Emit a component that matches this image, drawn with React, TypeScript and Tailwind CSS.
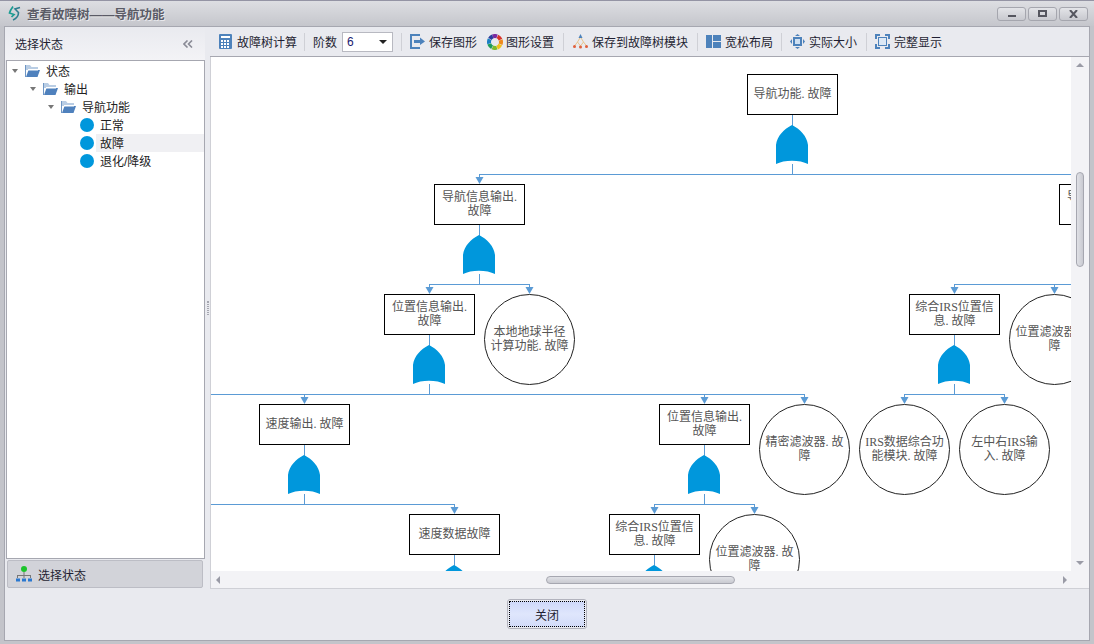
import type { ReactNode } from 'react';

const UI_FONT = { fontFamily: '"Liberation Sans", "Noto Sans CJK SC", sans-serif' };
const DIAGRAM_FONT = { fontFamily: '"Liberation Serif", "Noto Sans CJK SC", serif' };

// page coordinates of the drawing area
const CANVAS_X = 211;
const CANVAS_Y = 57;

const boxes = [
  { x: 747, y: 74, lines: ['导航功能. 故障'] },
  { x: 434, y: 184, lines: ['导航信息输出.', '故障'] },
  { x: 1059, y: 184, lines: ['导航信息输出.', '故障'] },
  { x: 384, y: 294, lines: ['位置信息输出.', '故障'] },
  { x: 909, y: 294, lines: ['综合IRS位置信', '息. 故障'] },
  { x: 259, y: 404, lines: ['速度输出. 故障'] },
  { x: 659, y: 404, lines: ['位置信息输出.', '故障'] },
  { x: 409, y: 514, lines: ['速度数据故障'] },
  { x: 609, y: 514, lines: ['综合IRS位置信', '息. 故障'] },
];

const circles = [
  { x: 484, y: 294, lines: ['本地地球半径', '计算功能. 故障'] },
  { x: 1009, y: 294, lines: ['位置滤波器. 故', '障'] },
  { x: 759, y: 404, lines: ['精密滤波器. 故', '障'] },
  { x: 859, y: 404, lines: ['IRS数据综合功', '能模块. 故障'] },
  { x: 959, y: 404, lines: ['左中右IRS输', '入. 故障'] },
  { x: 709, y: 514, lines: ['位置滤波器. 故', '障'] },
];

const buses = [
  { y: 174, from: 479, to: 1104, stem: 792, arrows: [479, 1104] },
  { y: 284, from: 429, to: 529, stem: 479, arrows: [429, 529] },
  { y: 284, from: 954, to: 1254, stem: 1104, arrows: [954, 1054] },
  { y: 394, from: 100, to: 804, stem: 429, arrows: [304, 704, 804] },
  { y: 394, from: 904, to: 1004, stem: 954, arrows: [904, 1004] },
  { y: 504, from: 100, to: 454, stem: 304, arrows: [454] },
  { y: 504, from: 654, to: 754, stem: 704, arrows: [654, 754] },
];

function Gate({ cx, top }: { cx: number; top: number }) {
  const l = cx - 16;
  return (
    <path
      transform={`translate(${l} ${top})`}
      d="M0 39V20C1 11 8 4 16 0C24 4 31 11 32 20V39C24 34.5 8 34.5 0 39Z"
      fill="#0097dc"
    />
  );
}

function Diagram() {
  return (
    <div className="relative flex-1 overflow-hidden bg-white" style={DIAGRAM_FONT}>
      <svg className="absolute inset-0" width="860" height="514" viewBox={`${CANVAS_X} ${CANVAS_Y} 860 514`}>
        {boxes.map((b) => (
          <g key={`${b.x}-${b.y}`}>
            <line x1={b.x + 45.5} y1={b.y + 40} x2={b.x + 45.5} y2={b.y + 52} stroke="#5b9bd5" />
            <Gate cx={b.x + 45} top={b.y + 51} />
          </g>
        ))}
        {buses.map((bus) => (
          <g key={`${bus.y}-${bus.stem}`}>
            <line x1={bus.from} y1={bus.y + 0.5} x2={bus.to} y2={bus.y + 0.5} stroke="#5b9bd5" />
            <line x1={bus.stem + 0.5} y1={bus.y - 10} x2={bus.stem + 0.5} y2={bus.y} stroke="#5b9bd5" />
            {bus.arrows.map((x) => (
              <g key={x}>
                <line x1={x + 0.5} y1={bus.y} x2={x + 0.5} y2={bus.y + 4} stroke="#5b9bd5" />
                <polygon points={`${x - 3.5},${bus.y + 3} ${x + 4.5},${bus.y + 3} ${x + 0.5},${bus.y + 10}`} fill="#5b9bd5" />
              </g>
            ))}
          </g>
        ))}
      </svg>
      {boxes.map((b) => (
        <div
          key={`${b.x}-${b.y}`}
          className="absolute flex h-[41px] w-[91px] flex-col items-center justify-center border border-black bg-white pb-[2px] text-[12px] leading-[14px] whitespace-nowrap text-[#555]"
          style={{ left: b.x - CANVAS_X, top: b.y - CANVAS_Y }}
        >
          {b.lines.map((t) => (
            <span key={t}>{t}</span>
          ))}
        </div>
      ))}
      {circles.map((c) => (
        <div
          key={`${c.x}-${c.y}`}
          className="absolute flex h-[91px] w-[91px] flex-col items-center justify-center rounded-full border border-[#222] bg-white pb-[2px] text-[12px] leading-[14px] whitespace-nowrap text-[#555]"
          style={{ left: c.x - CANVAS_X, top: c.y - CANVAS_Y }}
        >
          {c.lines.map((t) => (
            <span key={t}>{t}</span>
          ))}
        </div>
      ))}
    </div>
  );
}

function Logo() {
  return (
    <svg width="13" height="15" viewBox="0 0 13 15" fill="none" className="ml-[8px] shrink-0">
      <path d="M5 0.5C3.5 2.5 2 5 1.5 7L6 8.5L3.5 11" stroke="#1a9c92" strokeWidth="1.7" />
      <path d="M12 1.5L7 3L10.5 6.5C10.5 9.5 8.5 12.5 5 14" stroke="#2f7f8f" strokeWidth="1.6" />
    </svg>
  );
}

function CalcIcon() {
  const cells = [5, 8, 11];
  return (
    <svg width="13" height="15" viewBox="0 0 13 15">
      <rect width="13" height="15" rx="1" fill="#4d82bb" />
      <rect x="2" y="2" width="9" height="2" fill="#fff" />
      {cells.map((y) => cells.map((x) => <rect key={`${x}${y}`} x={x - 3} y={y + 1} width="2" height="2" fill="#fff" />))}
    </svg>
  );
}

function SaveIcon() {
  return (
    <svg width="15" height="15" viewBox="0 0 15 15">
      <path d="M0 0H10V2H2V13H10V15H0Z" fill="#4d82bb" />
      <path d="M4 6H10V3.5L15 7.5L10 11V9H4Z" fill="#4d82bb" />
    </svg>
  );
}

function WheelIcon() {
  const colors = ['#7b2aa0', '#d9342b', '#ee8a1d', '#f1c21b', '#7fbb2a', '#1f9c5a', '#1a7fc4', '#2b3d9c'];
  const r = 6;
  const c = 2 * Math.PI * r;
  return (
    <svg width="16" height="16" viewBox="0 0 16 16">
      {colors.map((col, i) => (
        <circle
          key={col}
          cx="8"
          cy="8"
          r={r}
          fill="none"
          stroke={col}
          strokeWidth="4"
          strokeDasharray={`${c / 8 - 0.4} ${(c * 7) / 8 + 0.4}`}
          strokeDashoffset={-(c / 8) * i}
          transform="rotate(-112 8 8)"
        />
      ))}
    </svg>
  );
}

function TreeIcon() {
  return (
    <svg width="15" height="15" viewBox="0 0 15 15" fill="none">
      <path d="M7.5 3L4.5 8L1.5 12M7.5 3L10.5 8L13.5 12M4.5 8L7.5 12L10.5 8" stroke="#e8c48c" strokeWidth="1" />
      <path d="M7.5 0L9.5 4H5.5Z" fill="#4d82bb" />
      <circle cx="1.5" cy="12.5" r="1.5" fill="#e0603c" />
      <circle cx="7.5" cy="13" r="1.5" fill="#e0603c" />
      <circle cx="13.5" cy="12.5" r="1.5" fill="#e0603c" />
    </svg>
  );
}

function LayoutIcon() {
  return (
    <svg width="15" height="13" viewBox="0 0 15 13">
      <rect width="6" height="13" fill="#4d82bb" />
      <rect x="7" width="8" height="6" fill="#4d82bb" />
      <rect x="7" y="7" width="8" height="6" fill="#4d82bb" />
    </svg>
  );
}

function ActualIcon() {
  return (
    <svg width="15" height="15" viewBox="0 0 15 15" fill="#4d82bb">
      <rect x="3" y="3" width="9" height="9" />
      <rect x="5" y="5" width="5" height="5" fill="#cfe0f2" />
      <path d="M5 2H10L7.5 0ZM5 13H10L7.5 15ZM2 5V10L0 7.5ZM13 5V10L15 7.5Z" />
    </svg>
  );
}

function FitIcon() {
  return (
    <svg width="15" height="15" viewBox="0 0 15 15" fill="none">
      <path d="M1 5V1H5M10 1H14V5M14 10V14H10M5 14H1V10" stroke="#4d82bb" strokeWidth="2" />
      <rect x="3.5" y="3.5" width="8" height="8" fill="#dce8f5" stroke="#4d82bb" />
    </svg>
  );
}

function OrgIcon() {
  return (
    <svg width="16" height="16" viewBox="0 0 16 16">
      <circle cx="8" cy="3" r="3" fill="#1cc42c" />
      <path d="M7.5 6H8.5V9H15V12H14V10H8.5V12H7.5V10H2V12H1V9H7.5Z" fill="#777" />
      <rect x="0" y="12.5" width="4" height="3" fill="#2a78d0" />
      <rect x="6" y="12.5" width="4" height="3" fill="#2a78d0" />
      <rect x="12" y="12.5" width="4" height="3" fill="#2a78d0" />
    </svg>
  );
}

function FolderIcon() {
  return (
    <svg width="15" height="14" viewBox="0 0 15 14" className="shrink-0">
      <path d="M0 1H5L6.5 3H13V6H0Z" fill="#b9cde4" />
      <path d="M0 1H1V13H0Z" fill="#6f96c4" />
      <path d="M1 13L3.5 6H15L12.5 13Z" fill="#4f81bd" />
      <path d="M3 5H13V6.5H3Z" fill="#fff" />
    </svg>
  );
}

function Caret() {
  return <span className="h-0 w-0 shrink-0 border-x-[3.5px] border-t-[4px] border-x-transparent border-t-[#777]" />;
}

function Dot() {
  return <span className="h-[14px] w-[14px] shrink-0 rounded-full bg-[#0097dc]" />;
}

const Sep = () => <span className="mx-[4px] h-[18px] w-px shrink-0 bg-[#cfd0d6]" />;

function ToolItem({ icon, label, w }: { icon: ReactNode; label: string; w: string }) {
  return (
    <div className={`flex shrink-0 items-center ${w}`}>
      {icon}
      <span className="ml-auto whitespace-nowrap pt-[3px]">{label}</span>
    </div>
  );
}

function Toolbar() {
  return (
    <div className="flex h-[30px] shrink-0 items-center border-b border-[#a6a7b0] bg-[#e9eaef] pl-[9px] text-[12px] text-[#1f1f33]">
      <ToolItem icon={<CalcIcon />} label="故障树计算" w="w-[78px]" />
      <div className="mx-[3px] flex w-[9px] justify-center"><Sep /></div>
      <span className="ml-[1px] whitespace-nowrap pt-[3px]">阶数</span>
      <div className="ml-[5px] flex h-[20px] w-[51px] shrink-0 items-center justify-between border border-[#b8b9c1] bg-white pr-[5px] pl-[4px]">
        <span className="text-[#1a1a70]">6</span>
        <span className="h-0 w-0 border-x-[4px] border-t-[4px] border-x-transparent border-t-[#222]" />
      </div>
      <div className="mx-[3px] flex w-[10px] justify-center"><Sep /></div>
      <ToolItem icon={<SaveIcon />} label="保存图形" w="w-[67px] ml-[1px]" />
      <ToolItem icon={<WheelIcon />} label="图形设置" w="w-[67px] ml-[10px]" />
      <div className="flex w-[19px] justify-center"><Sep /></div>
      <ToolItem icon={<TreeIcon />} label="保存到故障树模块" w="w-[115px]" />
      <div className="flex w-[18px] justify-center"><Sep /></div>
      <ToolItem icon={<LayoutIcon />} label="宽松布局" w="w-[67px]" />
      <div className="flex w-[17px] justify-center"><Sep /></div>
      <ToolItem icon={<ActualIcon />} label="实际大小" w="w-[67px]" />
      <div className="flex w-[18px] justify-center"><Sep /></div>
      <ToolItem icon={<FitIcon />} label="完整显示" w="w-[67px]" />
    </div>
  );
}

function TreeRow({ depth, label }: { depth: number; label: string }) {
  return (
    <div className="flex h-[18px] items-center" style={{ paddingLeft: 5 + depth * 18 }}>
      <Caret />
      <span className="ml-[7px]"><FolderIcon /></span>
      <span className="ml-[6px] pt-[2px]">{label}</span>
    </div>
  );
}

function LeafRow({ label, active }: { label: string; active?: boolean }) {
  return (
    <div className="flex h-[18px] items-center pl-[73px]">
      <Dot />
      <span className={`ml-[2px] flex h-[18px] flex-1 items-center pt-[2px] pl-[4px] ${active ? 'bg-[#f0f0f3]' : ''}`}>{label}</span>
    </div>
  );
}

function WinButton({ children }: { children: ReactNode }) {
  return (
    <div className="flex h-[14px] w-[29px] items-center justify-center rounded-[3px] border border-[#a5a6ae] bg-gradient-to-b from-[#e3e4e8] to-[#c8c9cf]">
      {children}
    </div>
  );
}

export default function App() {
  return (
    <div className="flex h-[644px] w-[1094px] flex-col overflow-hidden border-t border-[#9494a4] bg-[#c3c4ca]" style={UI_FONT}>
      {/* Title bar */}
      <div className="flex h-[25px] shrink-0 items-center bg-gradient-to-b from-[#dddee2] to-[#c5c6cc]">
        <Logo />
        <span className="mt-[3px] ml-[6px] text-[12.5px] font-bold whitespace-nowrap text-[#5a5b66] [text-shadow:1px_1px_0_#e8e8ec]">
          查看故障树——导航功能
        </span>
        <div className="mr-[6px] ml-auto flex gap-[2px]">
          <WinButton><span className="mt-[5px] h-[2px] w-[8px] bg-[#55565f]" /></WinButton>
          <WinButton><span className="h-[7px] w-[9px] border-[2px] border-[#55565f]" /></WinButton>
          <WinButton>
            <svg width="9" height="8" viewBox="0 0 9 8" stroke="#55565f" strokeWidth="2"><path d="M1 0L8 8M8 0L1 8" /></svg>
          </WinButton>
        </div>
      </div>

      {/* Window body */}
      <div className="mx-[4px] mb-[3px] flex min-h-0 flex-1 flex-col border border-[#a6a7b0] bg-[#e9eaef]">
        <div className="flex h-[562px] shrink-0">
          {/* Left panel */}
          <div className="flex w-[200px] shrink-0 flex-col">
            <div className="flex h-[33px] shrink-0 items-center justify-between bg-gradient-to-b from-[#e9eaef] to-[#f3f3f6] pr-[12px] pl-[10px] text-[12px] text-[#1f1f33]">
              <span className="pt-[2px]">选择状态</span>
              <svg width="10" height="8" viewBox="0 0 10 8" fill="none" stroke="#8a8b96" strokeWidth="1.6">
                <path d="M4.5 0.5L1 4L4.5 7.5M9 0.5L5.5 4L9 7.5" />
              </svg>
            </div>
            <div className="ml-px h-[499px] shrink-0 border border-[#a6a7b0] bg-white pt-[1px] text-[12px] text-[#222]">
              <TreeRow depth={0} label="状态" />
              <TreeRow depth={1} label="输出" />
              <TreeRow depth={2} label="导航功能" />
              <LeafRow label="正常" />
              <LeafRow label="故障" active />
              <LeafRow label="退化/降级" />
            </div>
            <div className="mt-[1px] ml-[2px] flex h-[28px] w-[196px] items-center rounded-[2px] border border-[#bcbdc5] bg-[#d2d3d9] pl-[8px] text-[12px] text-[#1f1f33]">
              <OrgIcon />
              <span className="ml-[6px] pt-[3px]">选择状态</span>
            </div>
          </div>

          {/* Splitter */}
          <div className="flex w-[5px] shrink-0 items-center justify-center">
            <span className="h-[14px] w-[2px] border-x border-dotted border-[#a6a7b0]" />
          </div>

          {/* Main panel */}
          <div className="flex min-w-0 flex-1 flex-col">
            <Toolbar />
            <div className="flex min-h-0 flex-1 flex-col border-b border-l border-[#cfd0d6]">
              <div className="flex min-h-0 flex-1">
                <Diagram />
                <div className="flex w-[18px] shrink-0 flex-col items-center bg-[#f3f3f6]">
                  <span className="mt-[6px] h-0 w-0 border-x-[4px] border-b-[4px] border-x-transparent border-b-[#9a9ba6]" />
                  <span className="mt-[105px] h-[95px] w-[8px] rounded-[4px] border border-[#a6a7b0] bg-gradient-to-r from-[#e0e1e6] to-[#c9cad1]" />
                  <span className="mt-auto mb-[6px] h-0 w-0 border-x-[4px] border-t-[4px] border-x-transparent border-t-[#9a9ba6]" />
                </div>
              </div>
              <div className="flex h-[17px] shrink-0 items-center bg-[#f3f3f6] pr-[22px] pl-[5px]">
                <span className="h-0 w-0 border-y-[4px] border-r-[4px] border-y-transparent border-r-[#9a9ba6]" />
                <span className="ml-[326px] h-[8px] w-[189px] rounded-[4px] border border-[#a6a7b0] bg-gradient-to-b from-[#e0e1e6] to-[#c9cad1]" />
                <span className="ml-auto h-0 w-0 border-y-[4px] border-l-[4px] border-y-transparent border-l-[#9a9ba6]" />
              </div>
            </div>
          </div>
        </div>

        {/* Footer */}
        <div className="flex flex-1 items-start justify-center pt-[10px]">
          <div className="flex h-[30px] w-[80px] items-center justify-center rounded-[3px] border border-[#b2b3bd] bg-[#e9eaef] p-[1px]">
            <div className="flex h-full w-full items-center justify-center border border-dotted border-black bg-gradient-to-b from-[#cfd9fa] via-[#dfe6fc] to-[#d3dcf9] pt-[3px] text-[12px] text-[#1f1f33]">
              关闭
            </div>
          </div>
        </div>
      </div>
    </div>
  );
}
